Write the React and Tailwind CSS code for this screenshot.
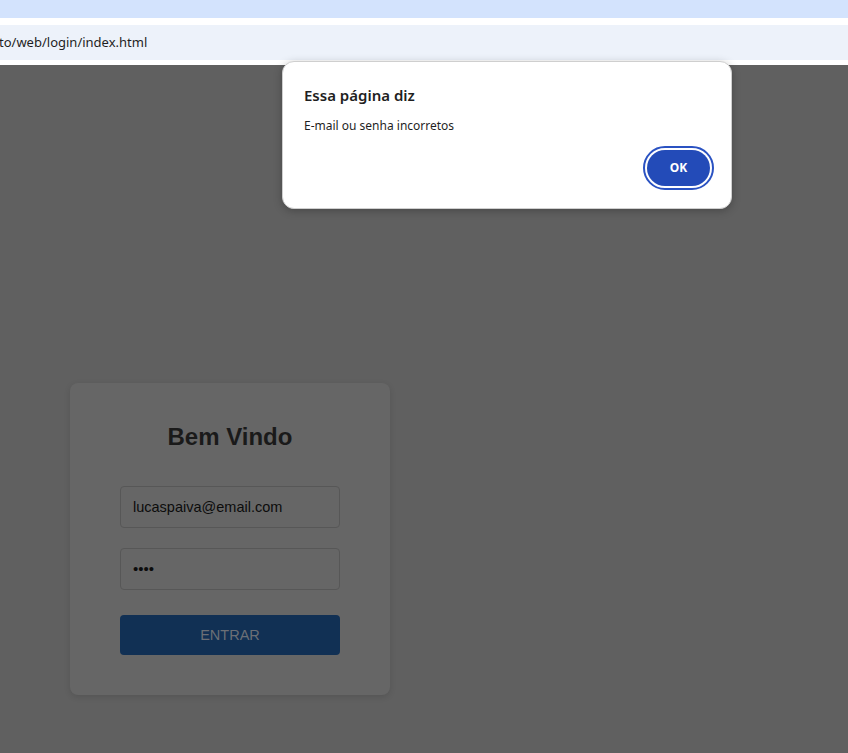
export default function App() {
  return (
    <div className="relative w-[848px] h-[753px] overflow-hidden bg-[#606060]" style={{ fontFamily: '"Liberation Sans", Arial, sans-serif' }}>
      {/* browser chrome */}
      <div className="h-[18px] bg-[#d3e3fd]" />
      <div className="h-[7px] bg-white" />
      <div className="h-[35px] bg-[#edf2fa] flex items-center">
        <span className="ml-[-1px] text-[13px] text-[#1f1f1f]" style={{ fontFamily: '"Noto Sans", "Open Sans", sans-serif' }}>to/web/login/index.html</span>
      </div>
      <div className="h-[5px] bg-white" />

      {/* page */}
      <div className="pl-[70px] pt-[318px]">
        <div className="w-[320px] h-[312px] bg-[#666666] rounded-[8px] shadow-[0_2px_6px_rgba(0,0,0,0.12)] flex flex-col items-center pt-[40px]">
          <h1 className="text-[24px] font-bold text-[#1a1a1a] leading-[28px]">Bem Vindo</h1>
          <div className="mt-[35px] w-[220px] h-[42px] border border-[#575757] rounded-[4px] flex items-center px-[12px] pt-[2px] text-[14.5px] text-[#0c0c0c]">lucaspaiva@email.com</div>
          <div className="mt-[20px] w-[220px] h-[42px] border border-[#575757] rounded-[4px] flex items-center px-[12px] pt-[1px] text-[15px] text-[#0c0c0c]">••••</div>
          <div className="mt-[25px] w-[220px] h-[40px] bg-[#113054] rounded-[4px] flex items-center justify-center pt-[2px] text-[14.5px] text-[#6b6f76]">ENTRAR</div>
        </div>
      </div>

      {/* alert dialog */}
      <div className="absolute left-[282px] top-[61px] w-[450px] h-[148px] bg-white rounded-[12px] border border-[#cfcfcf] shadow-[0_2px_8px_rgba(0,0,0,0.25)]" style={{ fontFamily: '"Noto Sans", "Open Sans", sans-serif' }}>
        <div className="pl-[21px] pt-[22px] text-[15px] font-semibold text-[#1f1f1f] leading-[22px]">Essa página diz</div>
        <div className="pl-[21px] pt-[12px] text-[12px] text-[#1f1f1f] leading-[16px]">E-mail ou senha incorretos</div>
        <div className="absolute right-[17px] bottom-[18px] w-[71px] h-[44px] rounded-full border-[2px] border-[#2a52c2] p-[2px] bg-white">
          <div className="w-full h-full rounded-full bg-[#234bb8] flex items-center justify-center text-white text-[12px] font-bold">OK</div>
        </div>
      </div>
    </div>
  );
}
